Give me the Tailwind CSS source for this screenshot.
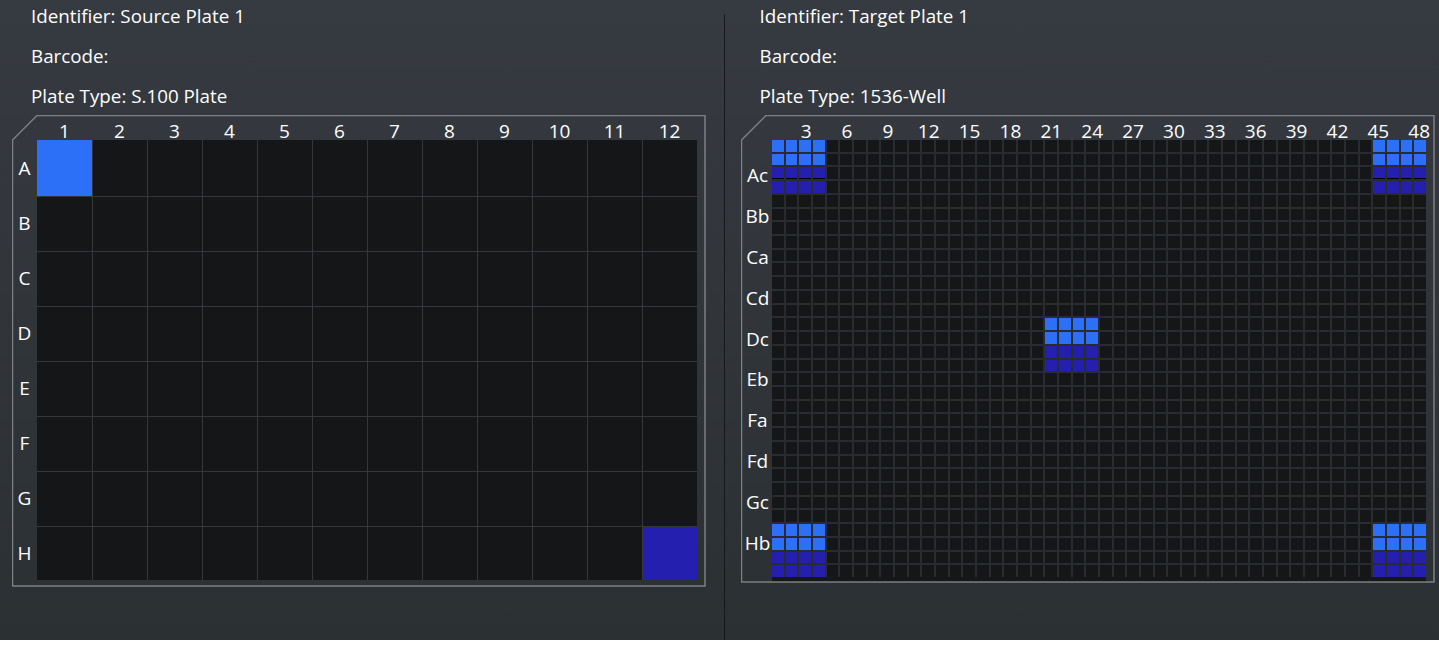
<!DOCTYPE html>
<html lang="en">
<head>
    <meta charset="UTF-8">
    <title>Plate Map</title>
    <script src="https://cdn.jsdelivr.net/npm/@tailwindcss/browser@4"></script>
</head>
<body class="bg-white font-['Open_Sans',sans-serif] text-[18.8px] text-white">
    <div class="flex h-[640px] w-[1439px] overflow-hidden bg-gradient-to-b from-[#363a41] to-[#2b3033]">
        <!-- source plate -->
        <div class="w-[724px] shrink-0">
            <div class="mt-[-4px] pl-[31px]">
                <div class="flex h-10 items-center leading-none">Identifier: Source Plate 1</div>
                <div class="flex h-10 items-center leading-none">Barcode:</div>
                <div class="flex h-10 items-center leading-none">Plate Type: S.100 Plate</div>
            </div>
            <div class="relative ml-3 mt-[-1px] h-[472px] w-[694px] pl-[25px] pt-[25px]">
                <svg class="absolute left-0 top-0" width="694" height="472" fill="none"><path d="M25 .5H693V471H.5V25Z" stroke="#7c7f83" stroke-width="1.5"/></svg>
                <div id="source-cols" class="absolute left-[25px] top-0 grid h-[25px] w-[660px] grid-cols-[repeat(12,55px)] text-[19px]"></div>
                <div id="source-rows" class="absolute left-0 top-[26px] grid w-[25px] grid-rows-[repeat(8,55px)] text-[19px]"></div>
                <div id="source-wells" class="grid h-[440px] w-[660px] grid-cols-[55px_repeat(11,54px)] grid-rows-[56px_repeat(6,54px)_53px] gap-px bg-[#34383c]"></div>
            </div>
        </div>

        <div class="mt-[14px] h-[626px] w-px shrink-0 bg-[#16181b]"></div>

        <!-- target plate -->
        <div class="flex-1">
            <div class="mt-[-4px] pl-[34.5px]">
                <div class="flex h-10 items-center leading-none">Identifier: Target Plate 1</div>
                <div class="flex h-10 items-center leading-none">Barcode:</div>
                <div class="flex h-10 items-center leading-none">Plate Type: 1536-Well</div>
            </div>
            <div class="relative ml-4 mt-[-1px] h-[468px] w-[694px] pl-[31px] pt-[25px]">
                <svg class="absolute left-0 top-0" width="694" height="468" fill="none"><path d="M25 .5H693V467H.5V25Z" stroke="#7c7f83" stroke-width="1.5"/></svg>
                <div id="target-cols" class="absolute left-[31px] top-0 grid h-[25px] w-[654px] grid-cols-[repeat(48,13.625px)] text-[19px]"></div>
                <div id="target-rows" class="absolute left-0 top-[26px] grid w-[31px] grid-rows-[repeat(32,13.66px)] text-[19px]"></div>
                <div class="h-[442px] w-[654px] bg-[#15181a]">
                    <div id="target-wells" class="grid h-[437px] w-[654px] grid-cols-[repeat(48,1fr)] grid-rows-[repeat(32,1fr)] gap-[2px] bg-[#282c30]"></div>
                </div>
            </div>
        </div>
    </div>
    <div class="h-2 bg-white"></div>

    <script>
        const EMPTY = 'bg-[#141618]';
        const BRIGHT = 'bg-[#2b70f7]';
        const DARK = 'bg-[#251fb0]';
        const DARK_LINE = 'bg-[#251fb0] border-b border-black';

        function colLabels(id, count, step) {
            let html = '';
            for (let i = 1; i <= count; i++) {
                const text = i % step === 0 ? i : '';
                html += `<div class="flex min-w-0 items-center justify-center whitespace-nowrap pt-[7px] leading-none">${text}</div>`;
            }
            document.getElementById(id).innerHTML = html;
        }

        colLabels('source-cols', 12, 1);
        colLabels('target-cols', 48, 3);

        document.getElementById('source-rows').innerHTML = 'ABCDEFGH'.split('').map(r =>
            `<div class="flex items-center justify-center leading-none">${r}</div>`).join('');

        let targetRows = '';
        for (let r = 1; r <= 32; r++) {
            const name = 'ABCDEFGH'[Math.floor((r - 1) / 4)] + 'abcd'[(r - 1) % 4];
            targetRows += `<div class="flex min-h-0 items-center justify-center whitespace-nowrap pl-[2px] leading-none">${r % 3 === 0 ? name : ''}</div>`;
        }
        document.getElementById('target-rows').innerHTML = targetRows;

        let source = '';
        for (let r = 0; r < 8; r++) {
            for (let c = 0; c < 12; c++) {
                let color = EMPTY;
                if (r === 0 && c === 0) color = BRIGHT;
                if (r === 7 && c === 11) color = DARK;
                source += `<div class="${color}"></div>`;
            }
        }
        document.getElementById('source-wells').innerHTML = source;

        // blocks of 4x4 wells: top two rows bright, bottom two dark
        const blocks = [[0, 0], [0, 44], [13, 20], [28, 0], [28, 44]];
        let target = '';
        for (let r = 0; r < 32; r++) {
            for (let c = 0; c < 48; c++) {
                let color = EMPTY;
                for (const [top, left] of blocks) {
                    if (r >= top && r < top + 4 && c >= left && c < left + 4) {
                        color = r - top < 2 ? BRIGHT : DARK;
                        // the top plate corners have a black line under the third row
                        if (top === 0 && r === 2) color = DARK_LINE;
                    }
                }
                target += `<div class="${color}"></div>`;
            }
        }
        document.getElementById('target-wells').innerHTML = target;
    </script>
</body>
</html>
